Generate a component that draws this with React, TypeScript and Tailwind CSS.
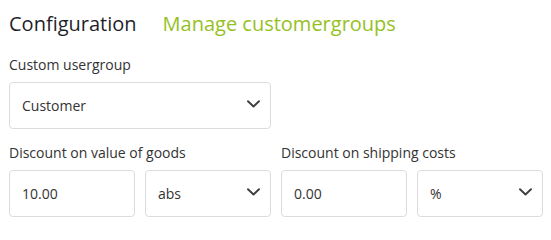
import { useState } from 'react';

const Chevron = () => (
    <svg width="13" height="8" viewBox="0 0 13 8" className="mb-1 shrink-0" fill="none">
        <polyline points="1,1.2 6.5,6.5 12,1.2" stroke="#3f3f3f" strokeWidth="1.9" strokeLinecap="round" strokeLinejoin="round" />
    </svg>
);

const SelectBox = ({ value, className = '' }: { value: string; className?: string }) => (
    <div className={`flex h-[47px] items-center justify-between rounded-[4px] border border-[#dcdcdc] bg-white pl-3 pr-[10px] text-[14px] text-[#333] ${className}`}>
        <span>{value}</span>
        <Chevron />
    </div>
);

const InputBox = ({ value }: { value: string }) => (
    <div className="flex h-[47px] items-center rounded-[4px] border border-[#dcdcdc] bg-white pl-3 text-[14px] text-[#333]">
        {value}
    </div>
);

const App = () => {
    const [group] = useState('Customer');

    return (
        <div className="min-h-screen bg-white px-[9px] pt-[10px] font-['Open_Sans',sans-serif]">
            <div className="flex items-baseline gap-[26px] text-[20px] leading-[28px]">
                <h2 className="text-[#1f1f2a]">Configuration</h2>
                <a className="cursor-pointer text-[#95c11f]">Manage customergroups</a>
            </div>

            <div className="mt-[17px] mb-[7px] text-[14px] leading-5 text-[#333]">Custom usergroup</div>
            <SelectBox value={group} className="w-[262px]" />

            <div className="mt-[14px] grid w-[534px] grid-cols-2 gap-[10px]">
                <div>
                    <div className="mb-[7px] text-[14px] leading-5 text-[#333]">Discount on value of goods</div>
                    <div className="grid grid-cols-2 gap-[10px]">
                        <InputBox value="10.00" />
                        <SelectBox value="abs" />
                    </div>
                </div>
                <div>
                    <div className="mb-[7px] text-[14px] leading-5 text-[#333]">Discount on shipping costs</div>
                    <div className="grid grid-cols-2 gap-[10px]">
                        <InputBox value="0.00" />
                        <SelectBox value="%" />
                    </div>
                </div>
            </div>
        </div>
    );
};

export default App;
